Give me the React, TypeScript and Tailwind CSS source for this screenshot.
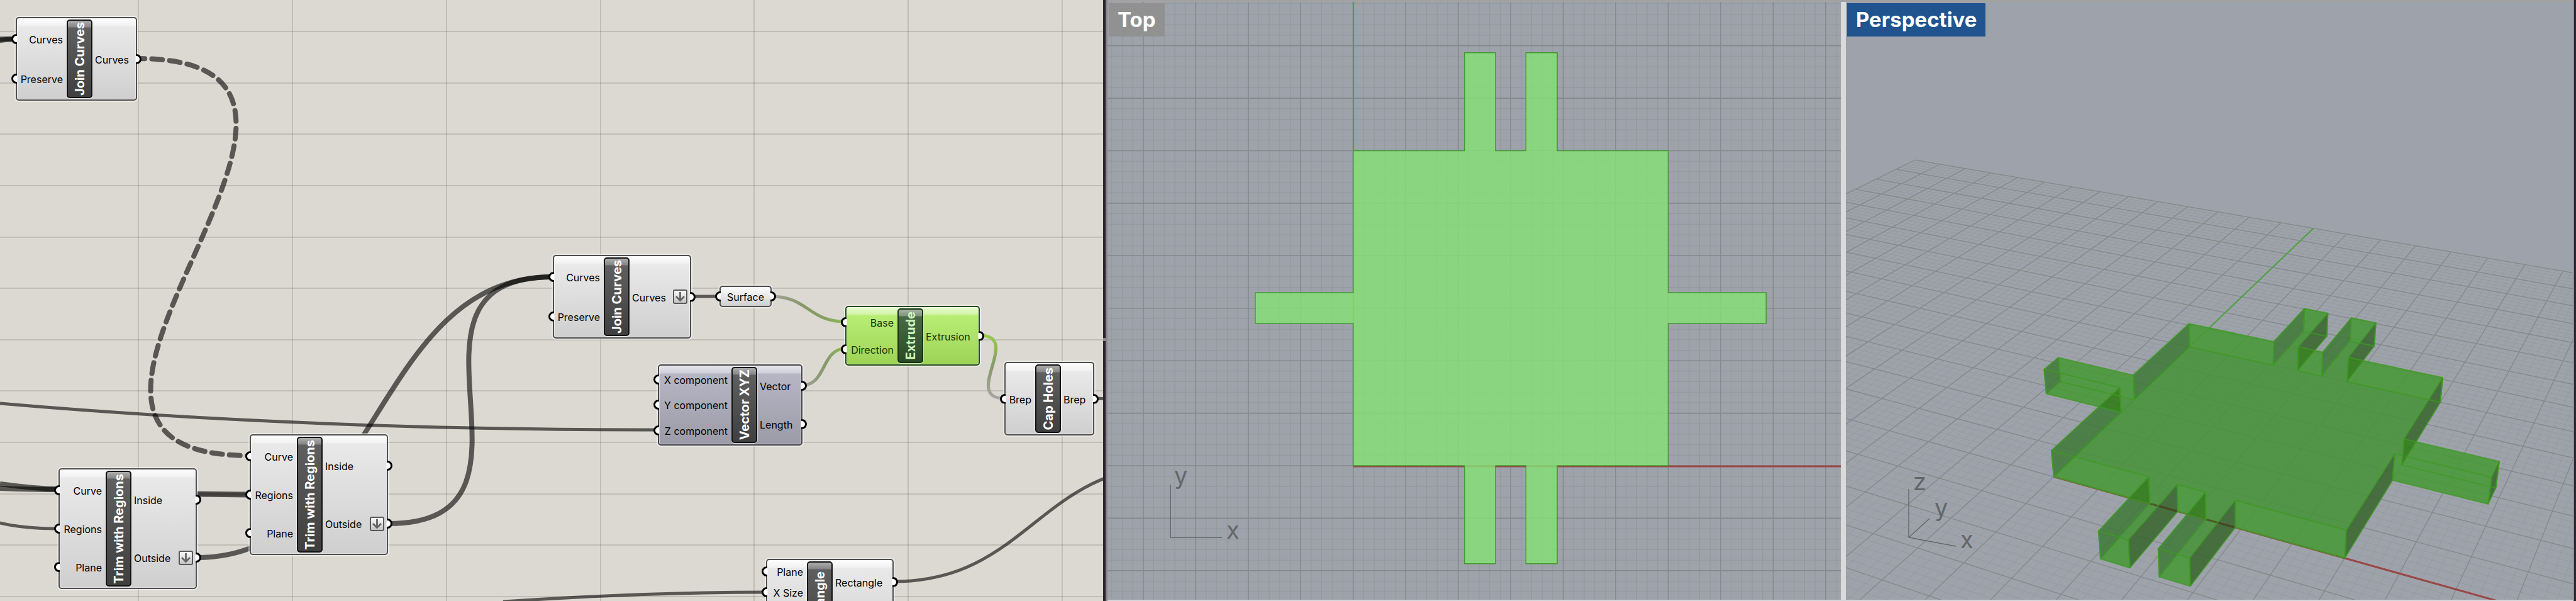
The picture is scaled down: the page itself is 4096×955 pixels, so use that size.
import React from 'react';

/* ---------- Node canvas ---------- */

type Tone = 'plain' | 'muted' | 'selected';

type Port = { label: string; flatten?: boolean };

type NodeSpec = {
  id: string;
  title: string;
  box: string;
  leftCol: string;
  tone: Tone;
  inputs: Port[];
  outputs: Port[];
};

const body: Record<Tone, string> = {
  plain:
    'border-[#505050] text-black bg-[linear-gradient(to_bottom,#fdfdfd_0,#f1f1f1_12px,#e9e9e9_13px,#cfcfcf_100%)]',
  muted:
    'border-[#45454a] text-black bg-[linear-gradient(to_bottom,#e6e6ec_0,#cfcfd9_12px,#b6b6c4_13px,#9b9ba8_100%)]',
  selected:
    'border-[#234a1e] text-[#17330e] bg-[linear-gradient(to_bottom,#e9fbd3_0,#d0f3a6_12px,#b9ee75_13px,#9dd355_100%)]',
};

const capsule: Record<Tone, string> = {
  plain:
    'border-[#111111] text-white bg-[linear-gradient(to_bottom,#adadad_0,#858585_10px,#5f5f5f_11px,#3f3f3f_100%)]',
  muted:
    'border-[#111111] text-white bg-[linear-gradient(to_bottom,#adadad_0,#858585_10px,#5f5f5f_11px,#3f3f3f_100%)]',
  selected:
    'border-[#12330e] text-[#cdf5bd] bg-[linear-gradient(to_bottom,#a9b5a6_0,#7f927c_10px,#4a6a45_11px,#2a4925_100%)]',
};

const nodes: NodeSpec[] = [
  {
    id: 'join-a',
    title: 'Join Curves',
    box: 'left-[25px] top-[27px] w-[193px] h-[133px]',
    leftCol: 'w-[79px]',
    tone: 'plain',
    inputs: [{ label: 'Curves' }, { label: 'Preserve' }],
    outputs: [{ label: 'Curves' }],
  },
  {
    id: 'trim-a',
    title: 'Trim with Regions',
    box: 'left-[93px] top-[744px] w-[220px] h-[192px]',
    leftCol: 'w-[73px]',
    tone: 'plain',
    inputs: [{ label: 'Curve' }, { label: 'Regions' }, { label: 'Plane' }],
    outputs: [{ label: 'Inside' }, { label: 'Outside', flatten: true }],
  },
  {
    id: 'trim-b',
    title: 'Trim with Regions',
    box: 'left-[397px] top-[690px] w-[220px] h-[192px]',
    leftCol: 'w-[73px]',
    tone: 'plain',
    inputs: [{ label: 'Curve' }, { label: 'Regions' }, { label: 'Plane' }],
    outputs: [{ label: 'Inside' }, { label: 'Outside', flatten: true }],
  },
  {
    id: 'join-b',
    title: 'Join Curves',
    box: 'left-[879px] top-[405px] w-[220px] h-[133px]',
    leftCol: 'w-[79px]',
    tone: 'plain',
    inputs: [{ label: 'Curves' }, { label: 'Preserve' }],
    outputs: [{ label: 'Curves', flatten: true }],
  },
  {
    id: 'vector',
    title: 'Vector XYZ',
    box: 'left-[1046px] top-[579px] w-[230px] h-[129px]',
    leftCol: 'w-[115px]',
    tone: 'muted',
    inputs: [{ label: 'X component' }, { label: 'Y component' }, { label: 'Z component' }],
    outputs: [{ label: 'Vector' }, { label: 'Length' }],
  },
  {
    id: 'extrude',
    title: 'Extrude',
    box: 'left-[1344px] top-[486px] w-[214px] h-[95px]',
    leftCol: 'w-[81px]',
    tone: 'selected',
    inputs: [{ label: 'Base' }, { label: 'Direction' }],
    outputs: [{ label: 'Extrusion' }],
  },
  {
    id: 'cap',
    title: 'Cap Holes',
    box: 'left-[1597px] top-[575px] w-[143px] h-[117px]',
    leftCol: 'w-[47px]',
    tone: 'plain',
    inputs: [{ label: 'Brep' }],
    outputs: [{ label: 'Brep' }],
  },
  {
    id: 'rectangle',
    title: 'Rectangle',
    box: 'left-[1218px] top-[888px] w-[203px] h-[138px]',
    leftCol: 'w-[63px]',
    tone: 'plain',
    inputs: [{ label: 'Plane' }, { label: 'X Size' }, { label: '' }, { label: '' }],
    outputs: [{ label: 'Rectangle' }, { label: '' }],
  },
];

function Grip({ side }: { side: 'left' | 'right' }) {
  const place = side === 'left' ? '-left-[9px] [clip-path:inset(0_7px_0_0)]' : '-right-[9px] [clip-path:inset(0_0_0_7px)]';
  return (
    <span className={`absolute top-1/2 h-4 w-4 -translate-y-1/2 rounded-full border-[3px] border-black bg-white ${place}`} />
  );
}

function Flatten() {
  return (
    <span className="ml-auto mr-1 flex h-[23px] w-[23px] items-center justify-center rounded-[3px] border-2 border-[#5a5a5a] bg-[linear-gradient(to_bottom,#fafafa,#c4c4c4)]">
      <svg viewBox="0 0 19 19" className="h-[19px] w-[19px]" fill="none" stroke="#646464" strokeWidth="2.8">
        <path d="M9.5 2V15M3 9l6.5 6.5L16 9" />
      </svg>
    </span>
  );
}

function GraphNode({ node }: { node: NodeSpec }) {
  return (
    <article
      className={`absolute flex rounded-[5px] border-2 py-[2px] text-base leading-5 shadow-[0_0_0_2px_rgba(255,255,255,0.45),inset_0_0_0_1px_rgba(255,255,255,0.45)] ${node.box} ${body[node.tone]}`}
    >
      <ul className={`flex flex-none flex-col ${node.leftCol}`}>
        {node.inputs.map((p, i) => (
          <li key={i} className="relative flex flex-1 items-center justify-end pr-[6px]">
            <Grip side="left" />
            <span className="whitespace-nowrap pt-[2px]">{p.label}</span>
          </li>
        ))}
      </ul>
      <h2
        className={`flex w-[41px] flex-none items-center justify-center rounded-[5px] border-2 shadow-[0_0_0_1px_rgba(255,255,255,0.5)] ${capsule[node.tone]}`}
      >
        <span className="rotate-180 whitespace-nowrap text-xl font-bold leading-6 [writing-mode:vertical-rl]">{node.title}</span>
      </h2>
      <ul className="flex min-w-0 flex-1 flex-col">
        {node.outputs.map((p, i) => (
          <li key={i} className="relative flex flex-1 items-center pl-1">
            <span className="whitespace-nowrap pt-[2px]">{p.label}</span>
            {p.flatten && <Flatten />}
            <Grip side="right" />
          </li>
        ))}
      </ul>
    </article>
  );
}

function Wires() {
  const columns = [220, 465, 710, 955, 1199, 1444, 1689];
  const rows = [50, 132, 213, 295, 377, 458, 540, 621, 703, 785, 866, 948];
  return (
    <svg className="absolute inset-0 h-full w-full" fill="none" aria-hidden="true">
      <defs>
        <linearGradient id="toBase" gradientUnits="userSpaceOnUse" x1="1230" y1="0" x2="1344" y2="0">
          <stop offset="0" stopColor="#a3a29c" />
          <stop offset="0.4" stopColor="#87986c" />
          <stop offset="0.7" stopColor="#879f62" />
          <stop offset="1" stopColor="#90be52" />
        </linearGradient>
        <linearGradient id="toDirection" gradientUnits="userSpaceOnUse" x1="1280" y1="0" x2="1344" y2="0">
          <stop offset="0" stopColor="#a09f99" />
          <stop offset="0.5" stopColor="#87986c" />
          <stop offset="1" stopColor="#90be52" />
        </linearGradient>
        <linearGradient id="toCap" gradientUnits="userSpaceOnUse" x1="0" y1="533" x2="0" y2="633">
          <stop offset="0" stopColor="#97cb50" />
          <stop offset="0.5" stopColor="#87986c" />
          <stop offset="1" stopColor="#a8a7a2" />
        </linearGradient>
      </defs>
      <g stroke="#000000" strokeOpacity="0.12" strokeWidth="2">
        {columns.map((x) => (
          <path key={x} d={`M${x} 0V955`} />
        ))}
        {rows.map((y) => (
          <path key={y} d={`M0 ${y}H1754`} />
        ))}
      </g>
      <g stroke="#000000" strokeOpacity="0.6">
        <path strokeWidth="8" strokeLinecap="round" strokeDasharray="17 11.3" strokeDashoffset="5" d="M218 93C678 93 -63 724 397 724" />
        <path strokeWidth="8" d="M-5 62H25" />
        <path strokeWidth="8" d="M-5 65Q10 62 25 62" />
        <path strokeWidth="5" d="M0 641C300 667 640 683 1046 683" />
        <path strokeWidth="8" d="M0 769Q60 777 93 777" />
        <path strokeWidth="8" d="M0 776Q60 778 93 778" />
        <path strokeWidth="5" d="M-4 830Q36 840 93 840" />
        <path strokeWidth="9" d="M313 785L397 786" />
        <path strokeWidth="6" strokeOpacity="0.2" d="M313 785L397 786" />
        <path strokeWidth="8" d="M617 832C905 832 591 440 879 440" />
        <path strokeWidth="8" d="M313 886C601 886 591 440 879 440" />
        <path strokeWidth="5" d="M1099 471H1144" />
        <path strokeWidth="5" d="M1740 633Q1750 633 1758 634" />
        <path strokeWidth="5" d="M1421 924C1634 924 1653 740 1866 740" />
        <path strokeWidth="5" d="M800 956C950 946 1080 941 1218 941" />
      </g>
      <path stroke="url(#toBase)" strokeWidth="5" d="M1226 471C1285 471 1285 511 1344 511" />
      <path stroke="url(#toDirection)" strokeWidth="5" d="M1276 612C1314 612 1306 554 1344 554" />
      <path stroke="url(#toCap)" strokeWidth="5" d="M1558 533C1626 533 1529 633 1597 633" />
    </svg>
  );
}

function GraphCanvas() {
  return (
    <section aria-label="Graph" className="relative h-full min-w-0 flex-[1754_1_0%] overflow-hidden bg-[#dcd9d2]">
      <Wires />
      {nodes.map((n) => (
        <GraphNode key={n.id} node={n} />
      ))}
      <article className="absolute left-[1144px] top-[454px] flex h-[34px] w-[83px] items-center justify-center rounded-[5px] border-2 border-[#505050] bg-[linear-gradient(to_bottom,#fdfdfd,#f0f0f0_30%,#cfcfcf)] text-base leading-5 text-black shadow-[0_0_0_2px_rgba(255,255,255,0.45)]">
        <Grip side="left" />
        <span className="pt-[2px]">Surface</span>
        <Grip side="right" />
      </article>
    </section>
  );
}

/* ---------- Shape, in grid cells ---------- */

type P2 = [number, number];

const ARM = 1.866;
const T = [2.12, 2.71, 3.29, 3.886];
const S = [2.708, 3.296];

const outline: P2[] = [
  [0, 0],
  [T[0], 0],
  [T[0], -ARM],
  [T[1], -ARM],
  [T[1], 0],
  [T[2], 0],
  [T[2], -ARM],
  [T[3], -ARM],
  [T[3], 0],
  [6, 0],
  [6, S[0]],
  [6 + ARM, S[0]],
  [6 + ARM, S[1]],
  [6, S[1]],
  [6, 6],
  [T[3], 6],
  [T[3], 6 + ARM],
  [T[2], 6 + ARM],
  [T[2], 6],
  [T[1], 6],
  [T[1], 6 + ARM],
  [T[0], 6 + ARM],
  [T[0], 6],
  [0, 6],
  [0, S[1]],
  [-ARM, S[1]],
  [-ARM, S[0]],
  [0, S[0]],
];

const pts = (list: P2[]) => list.map(([x, y]) => `${x.toFixed(1)},${y.toFixed(1)}`).join(' ');

function ViewLabel({ text, tone }: { text: string; tone: string }) {
  return (
    <button
      type="button"
      className={`absolute left-[2px] top-[2px] h-[53px] px-[14px] text-[33px] font-bold leading-[53px] text-white ${tone}`}
    >
      {text}
    </button>
  );
}

/* ---------- Top view ---------- */

const topX = (x: number) => 2151.7 + x * 83.47;
const topY = (y: number) => 740 - y * 83.42;

function TopView() {
  const minorX: string[] = [];
  const majorX: string[] = [];
  for (let i = -25; i <= 48; i++) {
    (i % 5 === 0 ? majorX : minorX).push(`M${topX(i / 5).toFixed(1)} 3V953`);
  }
  const minorY: string[] = [];
  const majorY: string[] = [];
  for (let i = -13; i <= 45; i++) {
    (i % 5 === 0 ? majorY : minorY).push(`M1761 ${topY(i / 5).toFixed(1)}H2927`);
  }
  return (
    <section aria-label="Top view" className="relative h-full min-w-0 flex-[1166_1_0%] overflow-hidden bg-[#9ea3ab]">
      <svg viewBox="1761 3 1166 950" preserveAspectRatio="xMinYMin slice" className="block h-full w-full" fill="none">
        <path d={minorX.concat(minorY).join('')} stroke="#93989c" strokeWidth="1" />
        <path d={majorX.concat(majorY).join('')} stroke="#84888c" strokeWidth="1.6" />
        <path d="M2152 3V740" stroke="#5a9a4c" strokeWidth="2.4" />
        <path d="M2151 741H2927" stroke="#9a4747" strokeWidth="3" />
        <polygon
          points={pts(outline.map(([x, y]) => [topX(x), topY(y)] as P2))}
          fill="rgb(133,226,117)"
          fillOpacity="0.8"
          stroke="#42992f"
          strokeWidth="1.5"
        />
        <path d="M1861 770V854H1943" stroke="#63676a" strokeWidth="1.6" />
        <g fill="#63676a" className="text-[38px] font-normal">
          <text x="1867" y="769">y</text>
          <text x="1950" y="856">x</text>
        </g>
      </svg>
      <ViewLabel text="Top" tone="bg-[#919191]" />
    </section>
  );
}

/* ---------- Perspective view ---------- */

function project(x: number, y: number, z = 0): P2 {
  const w = 1 - 0.0162 * x + 0.0328 * y - 0.013 * z;
  return [(16.68 * x + 150.15 * y - 46.2 * z + 3265.7) / w, (7.2 * x - 16.3 * y - 51 * z + 757.5) / w];
}

function crossing(a: P2, b: P2, c: P2, d: P2): P2 {
  const r: P2 = [b[0] - a[0], b[1] - a[1]];
  const s: P2 = [d[0] - c[0], d[1] - c[1]];
  const t = ((c[0] - a[0]) * s[1] - (c[1] - a[1]) * s[0]) / (r[0] * s[1] - r[1] * s[0]);
  return [a[0] + t * r[0], a[1] + t * r[1]];
}

const line = (a: P2, b: P2) => `M${a[0].toFixed(1)} ${a[1].toFixed(1)}L${b[0].toFixed(1)} ${b[1].toFixed(1)}`;

type Wall = { quad: P2[]; kind: 'along' | 'left' | 'right' };

const walls: Wall[] = outline.map((a, i) => {
  const b = outline[(i + 1) % outline.length];
  const quad = [project(a[0], a[1]), project(b[0], b[1]), project(b[0], b[1], 1), project(a[0], a[1], 1)];
  const kind = a[1] === b[1] ? 'along' : b[1] < a[1] ? 'left' : 'right';
  return { quad, kind };
});

/* Places where a side wall lies over the floor of the neighbouring part. */
function overlap(x: number, y: number, wallZ: 0 | 1): P2[] {
  const other = wallZ === 1 ? 0 : 1;
  const apex = crossing(project(x, y, wallZ), project(x, y - 1, wallZ), project(x, y, other), project(x + 1, y, other));
  return [project(x, y, 1), project(x, y, 0), apex];
}

const overlaps: P2[][] = [
  overlap(T[0], 0, 1),
  overlap(T[2], 0, 1),
  overlap(0, S[0], 1),
  overlap(T[1], 6, 0),
  overlap(T[3], 6, 0),
  overlap(6, S[1], 0),
];

function PerspectiveView() {
  const minor: string[] = [];
  const major: string[] = [];
  for (let i = -70; i <= 70; i++) {
    const v = i / 5;
    const bucket = i % 5 === 0 ? major : minor;
    bucket.push(line(project(v, -14), project(v, 14)), line(project(-14, v), project(14, v)));
  }
  return (
    <section aria-label="Perspective view" className="relative h-full min-w-0 flex-[1156_1_0%] overflow-hidden bg-[#9ea3ab]">
      <svg viewBox="2935 3 1156 950" preserveAspectRatio="xMinYMin slice" className="block h-full w-full" fill="none">
        <path d={minor.join('')} stroke="#90959a" strokeOpacity="0.75" strokeWidth="0.8" />
        <path d={major.join('')} stroke="#868a8c" strokeWidth="1.5" />
        <path d={line(project(0, 0), project(0, 14))} stroke="#57a04a" strokeWidth="2.4" />
        <path d={line(project(0, 0), project(14, 0))} stroke="#9a4747" strokeWidth="3" />
        <g opacity="0.85">
          <polygon points={pts(outline.map(([x, y]) => project(x, y)))} fill="rgb(70,147,55)" />
          {walls.filter((w) => w.kind === 'along').map((w, i) => (
            <polygon key={i} points={pts(w.quad)} fill="rgb(71,153,53)" />
          ))}
          {walls.filter((w) => w.kind === 'left').map((w, i) => (
            <polygon key={i} points={pts(w.quad)} fill="#3f7a37" />
          ))}
          {walls.filter((w) => w.kind === 'right').map((w, i) => (
            <polygon key={i} points={pts(w.quad)} fill="#37652d" />
          ))}
          {overlaps.map((o, i) => (
            <polygon key={i} points={pts(o)} fill="#2c7c11" />
          ))}
        </g>
        <path
          d={line(project(T[0], 0), project(T[1], 0)) + line(project(T[2], 0), project(T[3], 0))}
          stroke="#472f10"
          strokeOpacity="0.5"
          strokeWidth="3"
        />
        <g stroke="#3d9a22" strokeOpacity="0.75" strokeWidth="2" strokeLinejoin="round">
          {walls.map((w, i) => (
            <polygon key={i} points={pts(w.quad)} />
          ))}
        </g>
        <path d="M3035 777V854L3110 868M3035 854L3068 824" stroke="#63676a" strokeWidth="1.4" />
        <g fill="#63676a" className="text-[38px] font-normal">
          <text x="3042" y="779">z</text>
          <text x="3076" y="820">y</text>
          <text x="3117" y="871">x</text>
        </g>
      </svg>
      <ViewLabel text="Perspective" tone="bg-[#20548e]" />
    </section>
  );
}

/* ---------- Page ---------- */

export default function App() {
  return (
    <main className="flex h-screen w-full overflow-hidden font-['Inter','Liberation_Sans',sans-serif]">
      <GraphCanvas />
      <div className="flex h-full w-[4px] flex-none flex-col">
        <div className="flex-[537_1_0%] bg-[#2a242e]" />
        <div className="h-[5px] bg-[#8d8785]" />
        <div className="flex-[413_1_0%] bg-[#2a242e]" />
      </div>
      <div className="h-full w-[3px] flex-none bg-[#8b8889]" />
      <div className="flex h-full min-w-0 flex-[2330_1_0%] flex-col">
        <div className="h-[3px] flex-none bg-[#a1a2a1]" />
        <div className="flex min-h-0 flex-1">
          <TopView />
          <div className="h-full w-2 flex-none bg-[#d9dada]" />
          <PerspectiveView />
        </div>
        <div className="h-[2px] flex-none bg-[#d3d5d9]" />
      </div>
      <div className="h-full w-[2px] flex-none bg-[#8f9092]" />
      <div className="h-full w-[3px] flex-none bg-[#2d2730]" />
    </main>
  );
}
